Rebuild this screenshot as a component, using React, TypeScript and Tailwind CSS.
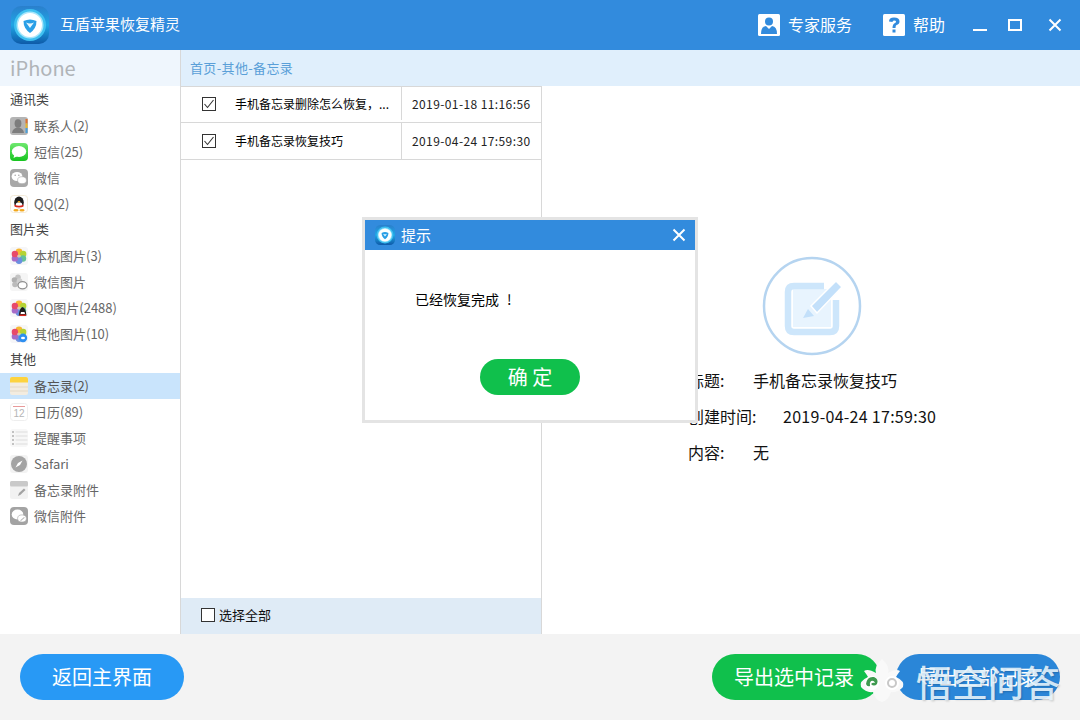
import type { FC, ReactNode } from "react"

const Ico: FC<{ children: ReactNode }> = ({ children }) => (
    <svg width="18" height="18" viewBox="0 0 18 18" className="shrink-0">
        {children}
    </svg>
)

const AppLogo: FC<{ size: number }> = ({ size }) => (
    <svg width={size} height={size} viewBox="0 0 38 38" className="shrink-0">
        <defs>
            <linearGradient id="logoBg" x1="0" y1="0" x2="0" y2="1">
                <stop offset="0" stopColor="#2a7fcc" />
                <stop offset="0.5" stopColor="#1fa6e6" />
                <stop offset="1" stopColor="#0e5aa8" />
            </linearGradient>
        </defs>
        <rect x="0" y="0" width="38" height="38" rx="10" fill="url(#logoBg)" />
        <circle cx="19" cy="19" r="16" fill="#3fc0f0" />
        <circle cx="19" cy="19" r="13.5" fill="#a8e6fb" />
        <circle cx="19" cy="19" r="12" fill="#ffffff" />
        <path d="M12.5 15 Q19 12 25.5 15 Q25.5 22.5 19 27 Q12.5 22.5 12.5 15Z" fill="#2a9fe6" />
        <path d="M15 16.5 L19 22 L23 16.5 Q19 18.5 15 16.5Z" fill="#e8f8ff" />
    </svg>
)

const Photos: FC<{ badge?: ReactNode }> = ({ badge }) => (
    <Ico>
        <rect width="18" height="18" rx="3" fill="#f6f6f8" />
        <circle cx="9" cy="4.8" r="3.4" fill="#f7b733" />
        <circle cx="13.2" cy="7" r="3.2" fill="#b5d334" />
        <circle cx="13" cy="11.5" r="3.2" fill="#63c19a" />
        <circle cx="9" cy="13.5" r="3.4" fill="#6a8fe0" />
        <circle cx="4.9" cy="11.4" r="3.2" fill="#a66bc8" />
        <circle cx="4.9" cy="7" r="3.2" fill="#e8496a" />
        <circle cx="9" cy="9" r="1.6" fill="#d7c9a8" />
        {badge}
    </Ico>
)

const icons: Record<string, ReactNode> = {
    contacts: (
        <Ico>
            <rect width="18" height="18" rx="3" fill="#b4b4b4" />
            <rect x="15.5" y="2" width="2" height="4.5" fill="#e0702f" />
            <rect x="15.5" y="6.5" width="2" height="4.5" fill="#e5b52f" />
            <rect x="15.5" y="11" width="2" height="5" fill="#4c9fd8" />
            <ellipse cx="8" cy="6.5" rx="3.4" ry="4.2" fill="#7d7d7d" />
            <path d="M2 16 Q2.5 11.5 7 10.5 L9 10.5 Q13.5 11.5 14 16Z" fill="#7d7d7d" />
        </Ico>
    ),
    sms: (
        <Ico>
            <defs>
                <linearGradient id="smsBg" x1="0" y1="0" x2="0" y2="1">
                    <stop offset="0" stopColor="#6fe86f" />
                    <stop offset="1" stopColor="#16c41f" />
                </linearGradient>
            </defs>
            <rect width="18" height="18" rx="4" fill="url(#smsBg)" />
            <ellipse cx="9" cy="8.5" rx="7.2" ry="5.4" fill="#ffffff" />
            <path d="M4.5 11 L3.5 15 L8 12.8Z" fill="#ffffff" />
        </Ico>
    ),
    wechat: (
        <Ico>
            <rect width="18" height="18" rx="4" fill="#a8a8a8" />
            <ellipse cx="7" cy="7.5" rx="5.4" ry="4.5" fill="#ffffff" />
            <ellipse cx="12" cy="11.2" rx="4.4" ry="3.5" fill="#ffffff" stroke="#a8a8a8" strokeWidth="0.6" />
            <circle cx="5.2" cy="6.2" r="0.8" fill="#a8a8a8" />
            <circle cx="8.8" cy="6.2" r="0.8" fill="#a8a8a8" />
        </Ico>
    ),
    qq: (
        <Ico>
            <rect x="0.5" y="0.5" width="17" height="17" rx="3" fill="#ffffff" stroke="#f3ead8" />
            <ellipse cx="9" cy="7.5" rx="4.8" ry="6" fill="#1c1c1c" />
            <ellipse cx="9" cy="10.5" rx="3.4" ry="3.2" fill="#ffffff" />
            <path d="M4.5 9.5 Q9 12 13.5 9.5 L13.5 11.5 Q9 13.5 4.5 11.5Z" fill="#d9261c" />
            <path d="M7.5 6 L10.5 6 L9 8Z" fill="#f2a81d" />
            <ellipse cx="6" cy="15.2" rx="2.6" ry="1.3" fill="#f2a81d" />
            <ellipse cx="12" cy="15.2" rx="2.6" ry="1.3" fill="#f2a81d" />
        </Ico>
    ),
    photos: <Photos />,
    wxPhotos: (
        <Ico>
            <rect width="18" height="18" rx="3" fill="#f5f5f5" />
            <circle cx="8" cy="4.2" r="2.8" fill="#c4c4c4" />
            <circle cx="4.5" cy="7" r="2.8" fill="#b0b0b0" />
            <circle cx="5" cy="11.5" r="2.8" fill="#bbbbbb" />
            <circle cx="9.5" cy="8" r="2.8" fill="#cfcfcf" />
            <ellipse cx="12.5" cy="12.2" rx="4.5" ry="3.6" fill="#ffffff" stroke="#8f8f8f" strokeWidth="1.2" />
        </Ico>
    ),
    qqPhotos: (
        <Photos
            badge={
                <>
                    <path d="M12.5 8 Q15.8 9 16.5 16.5 L8.8 16.5 Q9.5 9 12.5 8Z" fill="#1c1c1c" />
                    <path d="M11 13 H14.5 L15 15 H10.5Z" fill="#ffffff" />
                    <rect x="9.5" y="15.5" width="6.5" height="1.5" fill="#d9261c" />
                </>
            }
        />
    ),
    otherPhotos: (
        <Photos
            badge={
                <>
                    <circle cx="13" cy="13" r="4.2" fill="#2d8ff0" />
                    <ellipse cx="13" cy="13" rx="2" ry="1.3" fill="#ffffff" />
                </>
            }
        />
    ),
    notes: (
        <Ico>
            <rect width="18" height="18" rx="2" fill="#f3ece0" />
            <path d="M0 2 Q0 0 2 0 L16 0 Q18 0 18 2 L18 5.5 L0 5.5Z" fill="#fdd33f" />
            <rect y="9.5" width="18" height="1" fill="#e3d8c6" />
            <rect y="13.5" width="18" height="1" fill="#e3d8c6" />
        </Ico>
    ),
    calendar: (
        <Ico>
            <rect x="0.5" y="0.5" width="17" height="17" rx="3" fill="#ffffff" stroke="#eeeeee" />
            <rect x="3" y="3" width="12" height="1" fill="#e89a9a" />
            <text x="9" y="14" textAnchor="middle" fontSize="10" fill="#b5b5b5" fontFamily="Liberation Sans, sans-serif">
                12
            </text>
        </Ico>
    ),
    reminder: (
        <Ico>
            <rect width="18" height="18" rx="3" fill="#f7f7f7" />
            {[3, 7, 11, 15].map(y => (
                <g key={y}>
                    <circle cx="3" cy={y} r="1" fill="#b0b0b0" />
                    <rect x="5.5" y={y - 0.5} width="12" height="1" fill="#dddddd" />
                </g>
            ))}
        </Ico>
    ),
    safari: (
        <Ico>
            <rect width="18" height="18" rx="3" fill="#f3f3f3" />
            <circle cx="9" cy="9" r="8" fill="#a3a3a3" />
            <path d="M12.5 5.5 L10 10 L5.5 12.5 L8 8Z" fill="#ffffff" />
        </Ico>
    ),
    noteFile: (
        <Ico>
            <rect width="18" height="18" rx="2" fill="#f2f2f2" />
            <rect width="18" height="5.5" rx="1.5" fill="#c9c9c9" />
            <path d="M8 15 L9 12 L14 7.5 L15.5 9 L10.5 13.8Z" fill="#a3a3a3" />
        </Ico>
    ),
    wxFile: (
        <Ico>
            <rect width="18" height="18" rx="4" fill="#a3a3a3" />
            <ellipse cx="7.5" cy="7.5" rx="5.8" ry="5" fill="#ffffff" />
            <ellipse cx="12" cy="11.5" rx="4.4" ry="3.6" fill="#ffffff" stroke="#a3a3a3" strokeWidth="0.6" />
            <rect x="10" y="11.5" width="5" height="1" fill="#b5b5b5" transform="rotate(-40 12.5 12)" />
        </Ico>
    ),
}

type SideEntry = { label: string; icon?: string; active?: boolean }

const sideEntries: SideEntry[] = [
    { label: "通讯类" },
    { label: "联系人(2)", icon: "contacts" },
    { label: "短信(25)", icon: "sms" },
    { label: "微信", icon: "wechat" },
    { label: "QQ(2)", icon: "qq" },
    { label: "图片类" },
    { label: "本机图片(3)", icon: "photos" },
    { label: "微信图片", icon: "wxPhotos" },
    { label: "QQ图片(2488)", icon: "qqPhotos" },
    { label: "其他图片(10)", icon: "otherPhotos" },
    { label: "其他" },
    { label: "备忘录(2)", icon: "notes", active: true },
    { label: "日历(89)", icon: "calendar" },
    { label: "提醒事项", icon: "reminder" },
    { label: "Safari", icon: "safari" },
    { label: "备忘录附件", icon: "noteFile" },
    { label: "微信附件", icon: "wxFile" },
]

const Checkbox: FC<{ checked?: boolean }> = ({ checked }) => (
    <svg width="14" height="14" viewBox="0 0 14 14" className="shrink-0">
        <rect x="0.5" y="0.5" width="13" height="13" fill="#ffffff" stroke="#333333" />
        {checked && <path d="M2.5 7 L5.5 10.5 L11.5 3" fill="none" stroke="#333333" strokeWidth="1.1" />}
    </svg>
)

const rows = [
    { title: "手机备忘录删除怎么恢复，...", date: "2019-01-18 11:16:56", h: "h-9 pb-[2px]" },
    { title: "手机备忘录恢复技巧", date: "2019-04-24 17:59:30", h: "h-[37px]" },
]

const Sidebar: FC = () => (
    <aside className="w-[181px] shrink-0 border-r border-[#d8d8d8] bg-white">
        <div className="h-9 bg-[#eff6fd] pl-[10px] text-[20px] leading-9 text-[#b0b4b8]">iPhone</div>
        <ul className="pt-px">
            {sideEntries.map(e => (
                <li
                    key={e.label}
                    className={`flex h-[26px] items-center gap-[6px] pl-[10px] text-[13px] ${
                        e.active ? "bg-[#c9e4fc] text-[#555555]" : e.icon ? "text-[#666666]" : "text-[#444444]"
                    }`}
                >
                    {e.icon && icons[e.icon]}
                    <span className={e.icon ? "" : "pb-0.5"}>{e.label}</span>
                </li>
            ))}
        </ul>
    </aside>
)

const RecordList: FC = () => (
    <section className="flex w-[361px] shrink-0 flex-col border-r border-[#d8d8d8]">
        <div className="flex-1 border-t border-[#d8d8d8]">
            {rows.map(r => (
                <div key={r.date} className={`flex ${r.h} items-center border-b border-[#d8d8d8] text-[12px] text-black`}>
                    <div className="flex w-[221px] shrink-0 items-center self-stretch border-r border-[#d8d8d8]">
                        <div className="ml-[21px]">
                            <Checkbox checked />
                        </div>
                        <span className="ml-[19px]">{r.title}</span>
                    </div>
                    <span className="pl-[10px] text-[12px] tracking-[0.4px] text-[#222222]">{r.date}</span>
                </div>
            ))}
        </div>
        <div className="flex h-9 items-center gap-1 bg-[#dfebf6] pb-0.5 pl-5 text-[13px] text-[#111111]">
            <Checkbox />
            <span>选择全部</span>
        </div>
    </section>
)

const Detail: FC = () => (
    <section className="flex-1 pl-[146px] pt-[170px] text-[16px] text-[#111111]">
        <svg width="100" height="100" viewBox="0 0 100 100" className="ml-[74px] block">
            <circle cx="50" cy="50" r="48" fill="#ffffff" stroke="#b5d4f0" strokeWidth="2.5" />
            <rect x="31" y="33" width="38" height="38" fill="#e8f4fe" />
            <path
                d="M62 30 H32 Q26 30 26 36 V70 Q26 76 32 76 H68 Q74 76 74 70 V44"
                fill="none"
                stroke="#cde6fb"
                strokeWidth="6.5"
            />
            <path d="M49 50 L74 25 L80 31 L55 57Z" fill="#c3e0fa" stroke="#ffffff" strokeWidth="1.5" />
            <path d="M46 53 L52 60 L41 62Z" fill="#c3e0fa" />
        </svg>
        <div className="mt-[6px] flex h-9 items-center">
            <span className="w-[65px]">标题:</span>
            <span>手机备忘录恢复技巧</span>
        </div>
        <div className="flex h-9 items-center">
            <span className="w-[95px]">创建时间:</span>
            <span className="tracking-[0.28px]">2019-04-24 17:59:30</span>
        </div>
        <div className="flex h-9 items-center">
            <span className="w-[65px]">内容:</span>
            <span>无</span>
        </div>
    </section>
)

const Dialog: FC = () => (
    <div className="absolute left-[362px] top-[217px] w-[336px] border-[3px] border-[#e4e4e4] bg-white">
        <div className="flex h-[30px] items-center bg-[#328bdd] pl-[10px] pr-[9px] text-[15px] text-white">
            <AppLogo size={20} />
            <span className="ml-[6px]">提示</span>
            <svg width="14" height="14" viewBox="0 0 14 14" className="ml-auto">
                <path d="M1.5 1.5 L12.5 12.5 M12.5 1.5 L1.5 12.5" stroke="#ffffff" strokeWidth="2" />
            </svg>
        </div>
        <div className="h-[170px] pt-[39px]">
            <p className="ml-[50px] text-[14px] leading-5 text-black">
                已经恢复完成<span className="ml-2">!</span>
            </p>
            <button className="ml-[115px] mt-[50px] block h-9 w-[100px] rounded-full bg-[#10c04c] text-[20px] leading-9 text-white">
                确 定
            </button>
        </div>
    </div>
)

const Watermark: FC = () => (
    <div className="absolute left-[859px] top-[658px] flex h-[46px] items-center gap-[11px]">
        <svg width="46" height="50" viewBox="0 0 46 50" className="shrink-0">
            <path d="M23 3 Q31 10 29 17 Q37 12 41 15 Q38 19 37 21 Q46 25 44 31 Q39 37 32 36 Q30 44 23 46 Q16 44 14 36 Q7 37 2 31 Q0 25 9 21 Q8 19 5 15 Q9 12 17 17 Q15 10 23 3Z" fill="#f9f9f9" />
            <circle cx="13" cy="27" r="7" fill="#ffffff" />
            <circle cx="33" cy="27" r="7" fill="#ffffff" />
            <path d="M7 28 Q8 20 15 21 Q20 23 18 28 Q15 31 12 28 Q14 26 16 27 Q15 24 12 25 Q10 27 11 30 Q8 31 7 28Z" fill="#3f9a50" />
            <circle cx="33" cy="27" r="4" fill="none" stroke="#c8c8c8" strokeWidth="2" />
        </svg>
        <span className="text-[36px] font-medium leading-none whitespace-nowrap text-[#e4f1f9] opacity-90 [text-shadow:1px_1px_2px_rgba(0,0,0,0.2)]">
            悟空问答
        </span>
    </div>
)

export default function App() {
    return (
        <div className="relative flex h-[720px] w-[1080px] flex-col overflow-hidden bg-white font-['Noto_Sans_CJK_SC','Noto_Sans',sans-serif]">
            <header className="flex h-[50px] shrink-0 items-center bg-[#328bdd] pl-[11px] text-white">
                <AppLogo size={38} />
                <h1 className="ml-[11px] pb-0.5 text-[15px] font-normal">互盾苹果恢复精灵</h1>
                <div className="ml-auto flex items-center text-[16px]">
                    <svg width="22" height="22" viewBox="0 0 22 22" className="mr-2">
                        <rect width="22" height="22" rx="1.5" fill="#ffffff" />
                        <circle cx="11" cy="7.5" r="4" fill="#328bdd" />
                        <path d="M3 20 Q3 12.5 8 12 L11 15 L14 12 Q19 12.5 19 20Z" fill="#328bdd" />
                    </svg>
                    <span className="pb-0.5">专家服务</span>
                    <svg width="22" height="22" viewBox="0 0 22 22" className="ml-[31px] mr-2">
                        <rect width="22" height="22" rx="1.5" fill="#ffffff" />
                        <path
                            d="M6 7.5 Q6 3.5 11 3.5 Q16.5 3.5 16.5 7.5 Q16.5 10 13.5 11 Q12.5 11.5 12.5 14 H9.5 Q9.5 10 12 9 Q13 8.5 13 7.5 Q13 6.5 11 6.5 Q9.5 6.5 9.5 8Z"
                            fill="#328bdd"
                        />
                        <rect x="9.5" y="15.5" width="3" height="3" fill="#328bdd" />
                    </svg>
                    <span className="pb-0.5">帮助</span>
                    <svg width="14" height="14" viewBox="0 0 14 14" className="ml-7">
                        <rect y="11" width="14" height="2" fill="#ffffff" />
                    </svg>
                    <svg width="14" height="14" viewBox="0 0 14 14" className="ml-[21px]">
                        <rect x="1" y="2" width="12" height="10" fill="none" stroke="#ffffff" strokeWidth="2" />
                    </svg>
                    <svg width="14" height="14" viewBox="0 0 14 14" className="ml-[26px] mr-[18px]">
                        <path d="M1.5 1.5 L12.5 12.5 M12.5 1.5 L1.5 12.5" stroke="#ffffff" strokeWidth="2" />
                    </svg>
                </div>
            </header>

            <div className="flex min-h-0 flex-1">
                <Sidebar />
                <main className="flex min-w-0 flex-1 flex-col">
                    <div className="h-9 shrink-0 bg-[#e0effc] pl-[9px] text-[13px] leading-9 tracking-[0.35px] text-[#5a9fd8]">
                        首页-其他-备忘录
                    </div>
                    <div className="flex min-h-0 flex-1">
                        <RecordList />
                        <Detail />
                    </div>
                </main>
            </div>

            <footer className="flex h-[86px] shrink-0 items-center bg-[#f3f3f3] px-5 text-[20px] text-white">
                <button className="h-[46px] w-[164px] rounded-full bg-[#2899f5]">返回主界面</button>
                <button className="ml-auto h-[46px] w-[168px] rounded-full bg-[#10c04c] pr-1">导出选中记录</button>
                <button className="ml-4 h-[46px] w-[164px] rounded-full bg-[#2a86d8]">导出全部记录</button>
            </footer>

            <Dialog />
            <Watermark />
        </div>
    )
}
